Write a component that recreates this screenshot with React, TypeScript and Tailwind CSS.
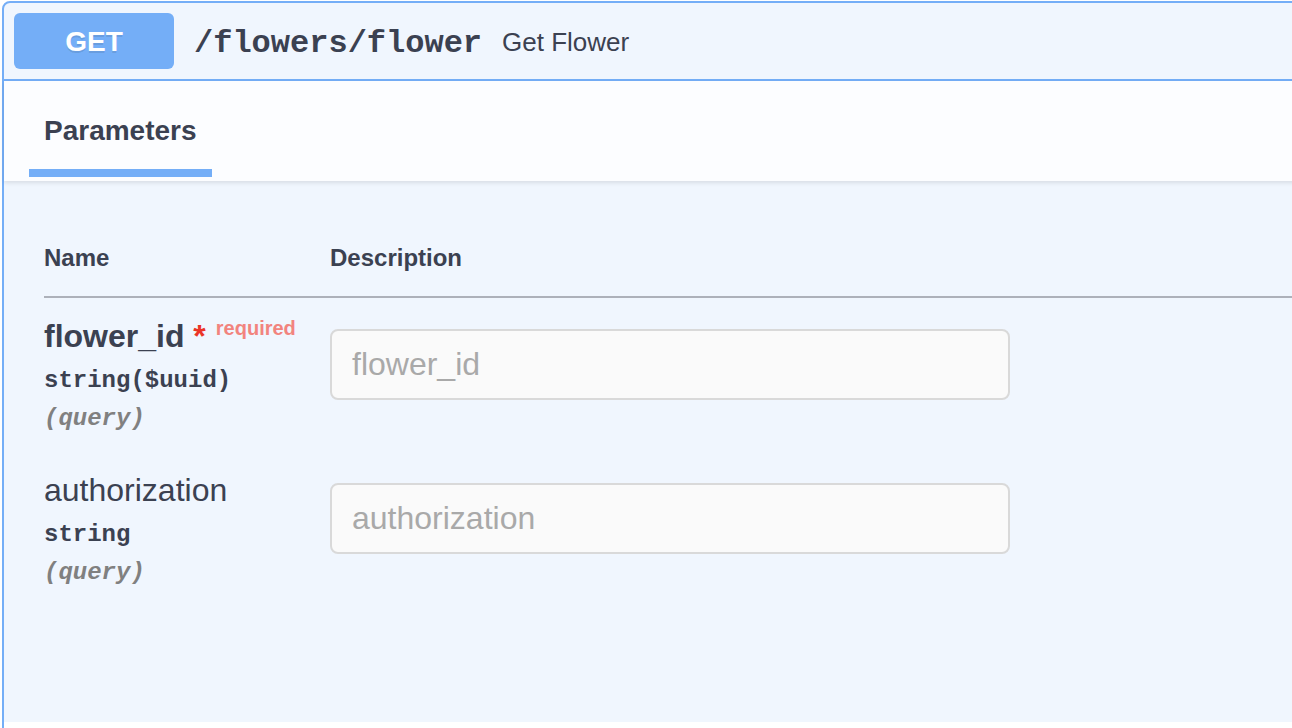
import React from "react";

const sans = "font-['Liberation_Sans','Helvetica','Arial',sans-serif]";
const mono = "font-['Liberation_Mono','Courier_New',monospace]";

type Param = { name: string; type: string; where: string; required?: boolean };

const params: Param[] = [
  { name: "flower_id", type: "string($uuid)", where: "(query)", required: true },
  { name: "authorization", type: "string", where: "(query)" },
];

function ParamRow({ p }: { p: Param }) {
  return (
    <div className="flex pt-[20px] pb-[19px]">
      <div className="w-[286px] shrink-0">
        <div className={`h-[37px] text-[32px] leading-[37px] text-[#3b4151] ${p.required ? "font-bold" : ""}`}>
          {p.name}
          {p.required && (
            <>
              <span className="text-[#eb3427]">&nbsp;*</span>
              <span className="relative -top-[12px] px-[10px] text-[20px] leading-none text-[#f2847e]">required</span>
            </>
          )}
        </div>
        <div className={`${mono} pt-[12px] pb-[10px] text-[24px] leading-[28px] font-bold text-[#3b4151]`}>{p.type}</div>
        <div className={`${mono} text-[24px] leading-[28px] font-bold italic text-[#808080]`}>{p.where}</div>
      </div>
      <div className="flex-1 pt-[11px]">
        <input
          readOnly
          placeholder={p.name}
          className={`${sans} w-[680px] h-[71px] rounded-[8px] border-2 border-[#d9d9d9] bg-[#fafafa] px-[20px] text-[32px] text-[#3b4151] outline-none placeholder:text-[#a9a9a9]`}
        />
      </div>
    </div>
  );
}

export default function App() {
  return (
    <div className={`${sans} w-[1292px] h-[728px] overflow-hidden bg-white pt-px pl-[2px]`}>
      <div className="w-[1514px] rounded-t-[8px] border-2 border-[#74aef7] bg-[#f0f6fe]">
        {/* summary */}
        <div className="flex items-center p-[10px] border-b-2 border-[#74aef7]">
          <div className="w-[160px] h-[56px] shrink-0 rounded-[6px] bg-[#74aef7] flex items-center justify-center pt-[2px] text-white text-[28px] font-bold [text-shadow:0_2px_0_rgba(0,0,0,0.1)]">
            GET
          </div>
          <span className={`${mono} px-[20px] pt-[6px] text-[32px] font-bold text-[#3b4151]`}>/flowers/flower</span>
          <span className="pt-[2px] text-[26px] text-[#3b4151]">Get Flower</span>
        </div>

        {/* section header */}
        <div className="h-[100px] flex items-center px-[40px] bg-[#fcfdff] shadow-[0_2px_4px_rgba(0,0,0,0.1)] relative z-10">
          <h4 className="relative text-[28px] font-bold text-[#3b4151]">
            Parameters
            <span className="absolute left-[-10%] w-[120%] top-[59px] h-[8px] bg-[#74aef7]" />
          </h4>
        </div>

        {/* parameters */}
        <div className="h-[541px] px-[40px] pt-[40px]">
          <div className="flex pt-[23px] pb-[24px] border-b-2 border-[#adb1ba] text-[24px] leading-[28px] font-bold text-[#3b4151]">
            <div className="w-[286px] shrink-0">Name</div>
            <div>Description</div>
          </div>
          {params.map((p) => (
            <ParamRow key={p.name} p={p} />
          ))}
        </div>

        {/* responses header start */}
        <div className="h-[100px] bg-white" />
      </div>
    </div>
  );
}
